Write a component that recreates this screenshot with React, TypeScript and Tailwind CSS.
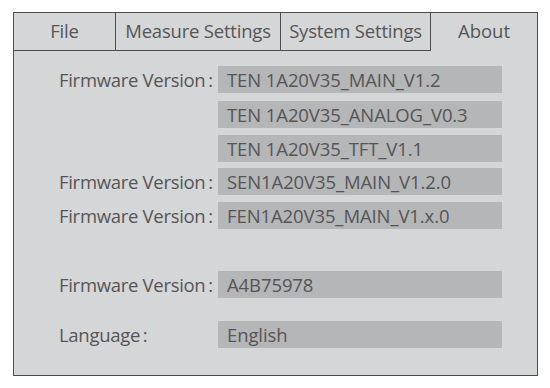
import React from 'react';

const tabs = [
  { name: 'File', w: 'w-[102px]' },
  { name: 'Measure Settings', w: 'w-[165px]' },
  { name: 'System Settings', w: 'w-[150px]' },
];

type Row = { label?: string; value?: string; mt: string };

const fw = 'Firmware Version\u2009:';

const rows: Row[] = [
  { label: fw, value: 'TEN 1A20V35_MAIN_V1.2', mt: 'mt-[15px]' },
  { value: 'TEN 1A20V35_ANALOG_V0.3', mt: 'mt-[8px]' },
  { value: 'TEN 1A20V35_TFT_V1.1', mt: 'mt-[7px]' },
  { label: fw, value: 'SEN1A20V35_MAIN_V1.2.0', mt: 'mt-[6px]' },
  { label: fw, value: 'FEN1A20V35_MAIN_V1.x.0', mt: 'mt-[7px]' },
  { label: fw, value: 'A4B75978', mt: 'mt-[42px]' },
  { label: 'Language\u2009:', value: 'English', mt: 'mt-[23px]' },
];

export default function App() {
  return (
    <div className="w-[550px] h-[388px] bg-white pt-[12px] pl-[13px] font-['Open_Sans',sans-serif] text-[#555555]">
      <div className="w-[525px] h-[364px] border border-[#4d4d4d] bg-[#d5d6d8] flex flex-col">
        {/* tab strip */}
        <div className="flex h-[38px] shrink-0">
          {tabs.map((t) => (
            <div
              key={t.name}
              className={`${t.w} border-r border-b border-[#4d4d4d] flex items-center justify-center pb-[1px] text-[18.5px] tracking-[-0.2px]`}
            >
              {t.name}
            </div>
          ))}
          <div className="flex-1 flex items-center justify-center pb-[3px] text-[18.5px]">About</div>
        </div>

        {/* about panel */}
        <div className="flex flex-col pl-[45px]">
          {rows.map((r, i) => (
            <div key={i} className={`flex items-center h-[27px] ${r.mt}`}>
              <div className="w-[159px] text-[18.5px] leading-[27px] whitespace-nowrap tracking-[-0.3px]">{r.label}</div>
              <div className="w-[284px] h-[27px] bg-[#b5b6b8] pl-[9px] flex items-center text-[18.5px] leading-[27px] whitespace-nowrap tracking-[-0.1px]">
                {r.value}
              </div>
            </div>
          ))}
        </div>
      </div>
    </div>
  );
}
